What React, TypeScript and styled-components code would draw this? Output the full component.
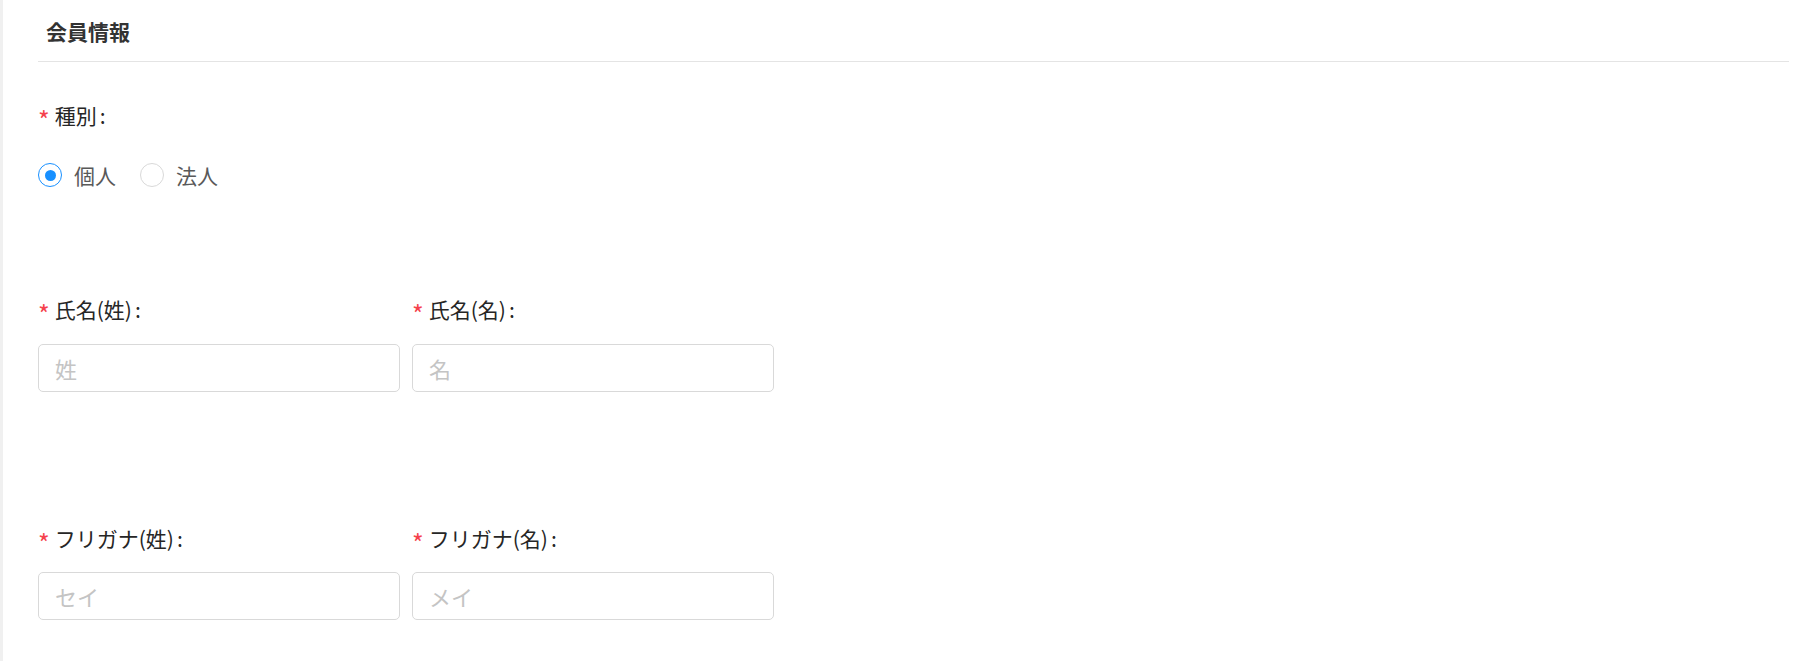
import React from "react";
import styled, { createGlobalStyle } from "styled-components";

const GlobalStyle = createGlobalStyle`
  html, body {
    margin: 0;
    padding: 0;
    background: #ffffff;
  }
  body {
    font-family: "Noto Sans CJK JP", "Noto Sans", sans-serif;
  }
  * { box-sizing: border-box; }
`;

const Page = styled.div`
  display: flex;
  min-height: 100vh;
  background: #ffffff;
`;

const SideStrip = styled.div`
  width: 3px;
  flex: none;
  background: #f0f0f0;
`;

const Main = styled.main`
  flex: 1;
  padding: 0 28px 0 35px;
`;

const Header = styled.div`
  height: 62px;
  display: flex;
  align-items: center;
  padding-left: 8px;
  border-bottom: 1.5px solid #e4e4e4;
  font-size: 21px;
  font-weight: 700;
  color: #333333;
`;

const Form = styled.form`
  padding-top: 39px;
`;

const Item = styled.div<{ $gap: number; $after: number }>`
  display: flex;
  flex-direction: column;
  row-gap: ${(p) => p.$gap}px;
  margin-bottom: ${(p) => p.$after}px;
`;

const Label = styled.label`
  display: flex;
  align-items: center;
  height: 28px;
  font-size: 21px;
  line-height: 28px;
  color: #262626;
`;

const Required = styled.span`
  color: #f5424d;
  font-size: 25px;
  line-height: 1;
  margin-right: 5px;
  transform: translateY(4px);
`;

const Colon = styled.span`
  margin-left: 3px;
`;

const RadioGroup = styled.div`
  display: flex;
  align-items: center;
  height: 28px;
`;

const RadioWrapper = styled.label`
  display: inline-flex;
  align-items: center;
  margin-right: 12px;
  cursor: pointer;
`;

const RadioCircle = styled.span<{ $checked: boolean }>`
  width: 24px;
  height: 24px;
  border-radius: 50%;
  border: 1.5px solid ${(p) => (p.$checked ? "#1890ff" : "#d9d9d9")};
  background: #ffffff;
  display: flex;
  align-items: center;
  justify-content: center;
  &::after {
    content: "";
    width: 11px;
    height: 11px;
    border-radius: 50%;
    background: #1890ff;
    display: ${(p) => (p.$checked ? "block" : "none")};
  }
`;

const RadioText = styled.span`
  padding: 0 12px;
  font-size: 21px;
  color: #595959;
`;

const Fields = styled.div`
  display: flex;
  column-gap: 12px;
`;

const Field = styled.div`
  width: 362px;
  display: flex;
  flex-direction: column;
`;

const Input = styled.input`
  width: 100%;
  height: 48px;
  padding: 0 16px;
  border: 1.5px solid #d9d9d9;
  border-radius: 5px;
  font-family: "Noto Sans CJK JP", "Noto Sans", sans-serif;
  font-size: 22px;
  color: #262626;
  outline: none;
  &::placeholder {
    color: #c4c4c4;
  }
`;

type FieldDef = { label: string; placeholder: string };

const FieldLabel = ({ text }: { text: string }) => (
  <Label>
    <Required>*</Required>
    {text}
    <Colon>:</Colon>
  </Label>
);

const PairRow = ({
  fields,
  gap,
  after,
}: {
  fields: FieldDef[];
  gap: number;
  after: number;
}) => (
  <Fields>
    {fields.map((f) => (
      <Field key={f.label}>
        <Item $gap={gap} $after={after}>
          <FieldLabel text={f.label} />
          <Input placeholder={f.placeholder} />
        </Item>
      </Field>
    ))}
  </Fields>
);

export default function App() {
  const [kind, setKind] = React.useState("個人");
  return (
    <>
      <GlobalStyle />
      <Page>
        <SideStrip />
        <Main>
          <Header>会員情報</Header>
          <Form onSubmit={(e) => e.preventDefault()}>
            <Item $gap={32} $after={106}>
              <FieldLabel text="種別" />
              <RadioGroup>
                {["個人", "法人"].map((k) => (
                  <RadioWrapper key={k} onClick={() => setKind(k)}>
                    <RadioCircle $checked={kind === k} />
                    <RadioText>{k}</RadioText>
                  </RadioWrapper>
                ))}
              </RadioGroup>
            </Item>
            <PairRow
              gap={21}
              after={132}
              fields={[
                { label: "氏名(姓)", placeholder: "姓" },
                { label: "氏名(名)", placeholder: "名" },
              ]}
            />
            <PairRow
              gap={20}
              after={0}
              fields={[
                { label: "フリガナ(姓)", placeholder: "セイ" },
                { label: "フリガナ(名)", placeholder: "メイ" },
              ]}
            />
          </Form>
        </Main>
      </Page>
    </>
  );
}
